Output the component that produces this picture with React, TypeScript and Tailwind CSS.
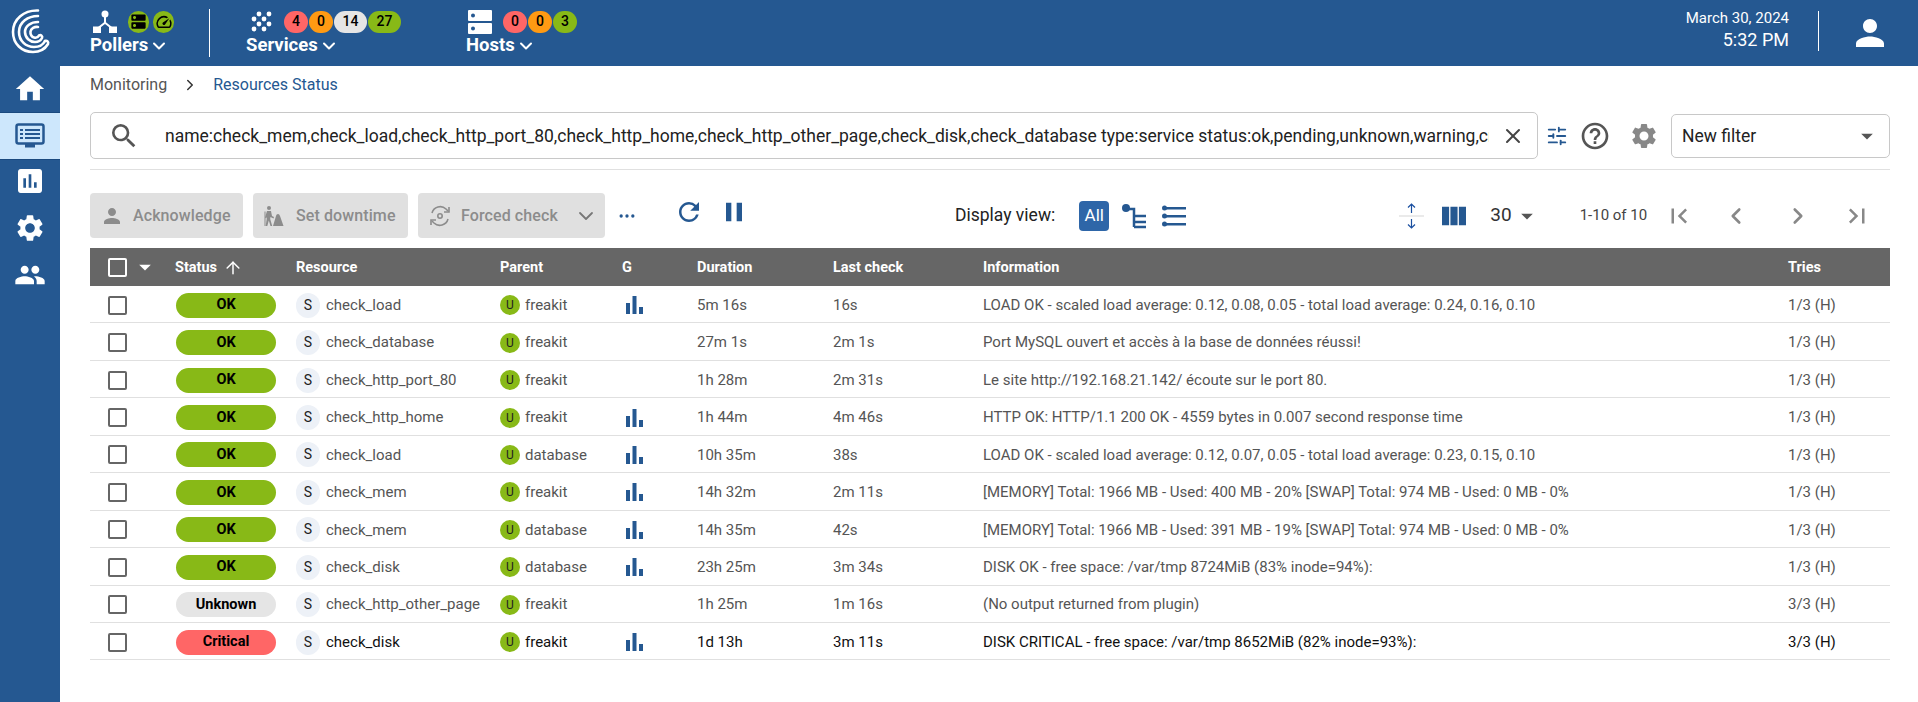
import { ArrowUp, ChevronDown, ChevronLeft, ChevronRight, MoreHorizontal, SlidersHorizontal, X } from 'lucide-react';
import {
  MdDns, MdHome, MdPause, MdPeople, MdPerson, MdRefresh, MdSearch, MdSettings, MdSpeed,
  MdArrowDropDown, MdHelpOutline, MdFirstPage, MdLastPage, MdViewColumn, MdPoll
} from 'react-icons/md';

const font = "font-['Roboto',sans-serif]";

const rows = [
  ['OK', 'check_load', 'freakit', true, '5m 16s', '16s', 'LOAD OK - scaled load average: 0.12, 0.08, 0.05 - total load average: 0.24, 0.16, 0.10', '1/3 (H)'],
  ['OK', 'check_database', 'freakit', false, '27m 1s', '2m 1s', 'Port MySQL ouvert et accès à la base de données réussi!', '1/3 (H)'],
  ['OK', 'check_http_port_80', 'freakit', false, '1h 28m', '2m 31s', 'Le site http://192.168.21.142/ écoute sur le port 80.', '1/3 (H)'],
  ['OK', 'check_http_home', 'freakit', true, '1h 44m', '4m 46s', 'HTTP OK: HTTP/1.1 200 OK - 4559 bytes in 0.007 second response time', '1/3 (H)'],
  ['OK', 'check_load', 'database', true, '10h 35m', '38s', 'LOAD OK - scaled load average: 0.12, 0.07, 0.05 - total load average: 0.23, 0.15, 0.10', '1/3 (H)'],
  ['OK', 'check_mem', 'freakit', true, '14h 32m', '2m 11s', '[MEMORY] Total: 1966 MB - Used: 400 MB - 20% [SWAP] Total: 974 MB - Used: 0 MB - 0%', '1/3 (H)'],
  ['OK', 'check_mem', 'database', true, '14h 35m', '42s', '[MEMORY] Total: 1966 MB - Used: 391 MB - 19% [SWAP] Total: 974 MB - Used: 0 MB - 0%', '1/3 (H)'],
  ['OK', 'check_disk', 'database', true, '23h 25m', '3m 34s', 'DISK OK - free space: /var/tmp 8724MiB (83% inode=94%):', '1/3 (H)'],
  ['Unknown', 'check_http_other_page', 'freakit', false, '1h 25m', '1m 16s', '(No output returned from plugin)', '3/3 (H)'],
  ['Critical', 'check_disk', 'freakit', true, '1d 13h', '3m 11s', 'DISK CRITICAL - free space: /var/tmp 8652MiB (82% inode=93%):', '3/3 (H)'],
] as const;

const cols = 'grid grid-cols-[85px_121px_204px_122px_75px_136px_150px_805px_1fr] items-center';

const Bars = () => (
  <svg width="17" height="18" viewBox="0 0 17 18" fill="#255891">
    <rect x="0" y="7" width="4" height="11" />
    <rect x="6.5" y="0" width="4" height="18" />
    <rect x="13" y="11" width="4" height="7" />
  </svg>
);

const Logo = () => (
  <svg width="44" height="50" viewBox="0 0 44 50" fill="none" stroke="#fff" strokeWidth="2.6" strokeLinecap="round">
    <path d="M30 4.500C16 4 5 13 5 26c0 12 9 20 20 20 7 0 12-3 15-8 .8-2-1-4-3-3" />
    <path d="M30 10C20 10 11 16 11 26c0 9 7 15 15 15 5 0 9-2 11-6" />
    <path d="M30 16c-7 0-13 4-13 10 0 6 5 10 10 10 4 0 6-2 7-4 .8-2-1-3.500-3-2.500-1 2-3 2.500-5 2-2-.5-4-3-3.500-6 .5-3 4-5 7.500-4.500" />
  </svg>
);

const PollerIcon = () => (
  <svg width="24" height="23" viewBox="0 0 24 23" fill="#fff">
    <circle cx="12" cy="4" r="3.5" />
    <rect x="11" y="6" width="2" height="7" />
    <path d="M12 11.500 5 17l1.200 1.500 5.800-4.500 5.800 4.500L19 17z" />
    <rect x="0" y="16.500" width="8" height="6.500" />
    <rect x="16" y="16.500" width="8" height="6.500" />
  </svg>
);

const ServicesIcon = () => (
  <svg width="22" height="21" viewBox="0 0 22 21" fill="#fff">
    {[[9, 3], [19, 3], [4, 8], [14, 8], [9, 13], [19, 13], [4, 18], [14, 18]].map(([cx, cy], i) => (
      <circle key={i} cx={cx} cy={cy} r={2.4} />
    ))}
  </svg>
);

const HostsIcon = () => (
  <svg width="24" height="24" viewBox="0 0 24 24" fill="#fff">
    <path fillRule="evenodd" d="M1 0h22a1 1 0 0 1 1 1v9a1 1 0 0 1-1 1H1a1 1 0 0 1-1-1V1a1 1 0 0 1 1-1zm4 3.500a2 2 0 1 0 0 4 2 2 0 0 0 0-4z" />
    <path fillRule="evenodd" d="M1 13h22a1 1 0 0 1 1 1v9a1 1 0 0 1-1 1H1a1 1 0 0 1-1-1v-9a1 1 0 0 1 1-1zm4 3.500a2 2 0 1 0 0 4 2 2 0 0 0 0-4z" />
  </svg>
);

const DowntimeIcon = () => (
  <svg width="20" height="22" viewBox="0 0 20 22" fill="#8c8c8c">
    <circle cx="5" cy="3" r="2" />
    <path d="M3 6h4l1 5 2 1-.5 1.500L6.500 12l-.3 2 2 7H6.500L4.800 15.500 3.300 21H1.700l1.300-9-.9 1.500L1 12.500z" />
    <path d="M0.500 6.500h1v14.500h-1z" />
    <path d="M14 9c1 0 1.500.8 2 2l3.500 10H9l3-10c.3-1.200 1-2 2-2z" />
  </svg>
);

const ForcedIcon = () => (
  <svg width="22" height="22" viewBox="0 0 22 22" fill="none" stroke="#8c8c8c" strokeWidth="1.600">
    <path d="M3 8a8.500 8.500 0 0 1 14-4l2 2" />
    <path d="M19 14a8.500 8.500 0 0 1-14 4l-2-2" />
    <path d="M20 2v5h-5M2 20v-5h5" />
    <circle cx="11" cy="11" r="2.200" />
  </svg>
);

const Badge = ({ color, children, wide }: { color: string; children: React.ReactNode; wide?: boolean }) => (
  <span className={`${color} ${wide ? 'w-[33px]' : 'w-[24px]'} h-[22px] rounded-full flex items-center justify-center text-[14px] font-medium text-black`}>
    {children}
  </span>
);

const NavLabel = ({ children }: { children: React.ReactNode }) => (
  <div className="flex items-center gap-[1px] text-[18.500px] font-bold leading-[22px]">
    {children}
    <ChevronDown size={20} strokeWidth={2.4} className="mt-[2px]" />
  </div>
);

function TopBar() {
  return (
    <header className="h-[66px] bg-[#255891] flex items-center text-white">
      <div className="w-[60px] flex justify-center -mt-[4px]"><Logo /></div>
      <div className="w-[150px] pl-[30px] h-[48px] border-r border-white">
        <div className="flex items-center gap-[11px] h-[25px] pl-[3px]">
          <PollerIcon />
          <div className="flex gap-[4px]">
            <span className="w-[21px] h-[22px] rounded-full bg-[#88b917] flex items-center justify-center text-black"><MdDns size={19} /></span>
            <span className="w-[21px] h-[22px] rounded-full bg-[#88b917] flex items-center justify-center text-black"><MdSpeed size={18} /></span>
          </div>
        </div>
        <NavLabel>Pollers</NavLabel>
      </div>
      <div className="w-[220px] pl-[36px] h-[48px]">
        <div className="flex items-center gap-[12px] h-[25px] pl-[4px]">
          <ServicesIcon />
          <div className="flex gap-[1px]">
            <Badge color="bg-[#ff6666]">4</Badge>
            <Badge color="bg-[#ff9a13]">0</Badge>
            <Badge color="bg-[#e5e5e5]" wide>14</Badge>
            <Badge color="bg-[#88b917]" wide>27</Badge>
          </div>
        </div>
        <NavLabel>Services</NavLabel>
      </div>
      <div className="pl-[36px] h-[48px]">
        <div className="flex items-center gap-[11px] h-[25px] pl-[2px]">
          <HostsIcon />
          <div className="flex gap-[1px]">
            <Badge color="bg-[#ff6666]">0</Badge>
            <Badge color="bg-[#ff9a13]">0</Badge>
            <Badge color="bg-[#88b917]">3</Badge>
          </div>
        </div>
        <NavLabel>Hosts</NavLabel>
      </div>
      <div className="ml-auto text-right pr-[29px] h-[40px] -mt-[4px] border-r border-white mr-[30px]">
        <div className="text-[15px] leading-[18px] -mt-[2px]">March 30, 2024</div>
        <div className="text-[18px] leading-[26px]">5:32 PM</div>
      </div>
      <div className="pr-[27px]"><MdPerson size={42} /></div>
    </header>
  );
}

function SideBar() {
  return (
    <aside className="w-[60px] bg-[#255891] text-white flex flex-col items-center shrink-0 min-h-[636px]">
      <div className="h-[46px] flex items-center"><MdHome size={34} /></div>
      <div className="h-[48px] w-full bg-[#cde7fc] flex items-center justify-center border-y border-[#1a4a7f]">
        <svg width="30" height="26" viewBox="0 0 30 26" fill="none">
          <rect x="1.500" y="1.500" width="27" height="19" rx="2" stroke="#255891" strokeWidth="2.500" />
          <path d="M5 7h3M10 7h15M5 11h3M10 11h15M5 15h3M10 15h15" stroke="#255891" strokeWidth="2" />
          <rect x="10" y="21" width="10" height="3.500" fill="#255891" />
        </svg>
      </div>
      <div className="h-[42px] flex items-center"><MdPoll size={32} /></div>
      <div className="h-[52px] flex items-center"><MdSettings size={32} /></div>
      <div className="h-[42px] flex items-center"><MdPeople size={32} /></div>
    </aside>
  );
}

function ActionButton({ icon, label, chevron, width, gap }: { icon: React.ReactNode; label: string; chevron?: boolean; width: string; gap: string }) {
  return (
    <div className={`${width} h-[45px] bg-[#e0e0e0] rounded-[4px] flex items-center pl-[11px] text-[#8c8c8c] text-[16px] font-medium tracking-[0.1px]`}>
      {icon}
      <span className={gap}>{label}</span>
      {chevron && <ChevronDown size={24} strokeWidth={1.800} className="ml-auto mr-[7px] text-[#777]" />}
    </div>
  );
}

export default function App() {
  return (
    <div className={`${font} w-[1918px] h-[702px] overflow-hidden bg-white text-[#555]`}>
      <TopBar />
      <div className="flex">
        <SideBar />
        <main className="flex-1 pl-[30px] pr-[28px]">
          <div className="h-[46px] pb-[8px] flex items-center text-[16px]">
            <span>Monitoring</span>
            <ChevronRight size={18} className="mx-[14px] text-[#333]" />
            <span className="text-[#255891]">Resources Status</span>
          </div>

          <div className="flex items-center h-[47px]">
            <div className="w-[1448px] h-[47px] border border-[#c8c8c8] rounded-[5px] flex items-center pl-[17px] pr-[12px]">
              <MdSearch size={32} className="text-[#555] shrink-0" />
              <div className="ml-[25px] pt-[2px] w-[1324px] overflow-hidden whitespace-nowrap text-[17.500px] text-[#222]">
                name:check_mem,check_load,check_http_port_80,check_http_home,check_http_other_page,check_disk,check_database type:service status:ok,pending,unknown,warning,critical
              </div>
              <X size={24} className="ml-auto text-[#444] shrink-0" />
            </div>
            <SlidersHorizontal size={22} className="ml-[8px] text-[#255891]" />
            <MdHelpOutline size={32} className="ml-[11px] text-[#555]" />
            <MdSettings size={30} className="ml-[18px] text-[#888]" />
            <div className="ml-[12px] w-[219px] h-[44px] pt-[1px] border border-[#c8c8c8] rounded-[5px] flex items-center pl-[10px] pr-[8px] text-[17.500px] text-[#222]">
              New filter
              <MdArrowDropDown size={28} className="ml-auto text-[#555]" />
            </div>
          </div>
          <div className="mt-[10px] border-t border-[#e0e0e0]" />

          <div className="h-[78px] pt-[13px] flex items-center">
            <ActionButton width="w-[153px]" gap="ml-[9px]" icon={<MdPerson size={24} className="-ml-[1px]" />} label="Acknowledge" />
            <div className="w-[10px]" />
            <ActionButton width="w-[155px]" gap="ml-[12px]" icon={<DowntimeIcon />} label="Set downtime" />
            <div className="w-[10px]" />
            <ActionButton width="w-[187px]" gap="ml-[10px]" icon={<ForcedIcon />} label="Forced check" chevron />
            <MoreHorizontal size={20} className="ml-[12px] text-[#255891]" />
            <MdRefresh size={30} className="ml-[37px] -mt-[8px] text-[#255891]" />
            <MdPause size={32} className="ml-[14px] -mt-[8px] text-[#255891]" />
            <span className="ml-[205px] text-[17.500px] text-[#222]">Display view:</span>
            <span className="ml-[24px] w-[30px] h-[30px] bg-[#2e66a8] rounded-[4px] text-white text-[17px] flex items-center justify-center">All</span>
            <svg className="ml-[12px]" width="26" height="26" viewBox="0 0 26 26" fill="none" stroke="#255891" strokeWidth="2.500">
              <circle cx="5" cy="5" r="4" fill="#255891" stroke="none" />
              <path d="M8 6h5v18M13 13h12M13 19h12M13 24h12" />
            </svg>
            <svg className="ml-[15px]" width="24" height="22" viewBox="0 0 24 22" fill="#255891">
              <circle cx="2.500" cy="3" r="2.500" /><circle cx="2.500" cy="11" r="2.500" /><circle cx="2.500" cy="19" r="2.500" />
              <rect x="4" y="2" width="20" height="2.500" /><rect x="4" y="10" width="20" height="2.500" /><rect x="4" y="18" width="20" height="2.500" />
            </svg>
            <svg className="ml-[213px]" width="25" height="26" viewBox="0 0 25 26" fill="none" stroke="#1a4fa0" strokeWidth="1.200">
              <path d="M12.500 1v9M9 4.500l3.500-3.500 3.500 3.500M12.500 25v-9M9 21.500l3.500 3.500 3.500-3.500" />
              <path d="M0 13h25" stroke="#ddd" />
            </svg>
            <MdViewColumn size={32} className="ml-[14px] text-[#255891]" />
            <span className="ml-[20px] text-[19px] text-[#333]">30</span>
            <MdArrowDropDown size={28} className="ml-[1px] text-[#555]" />
            <span className="ml-[39px] text-[15px] text-[#444]">1-10 of 10</span>
            <MdFirstPage size={30} className="ml-[17px] text-[#888]" />
            <ChevronLeft size={26} strokeWidth={2.4} className="ml-[29px] text-[#888]" />
            <ChevronRight size={26} strokeWidth={2.4} className="ml-[36px] text-[#888]" />
            <MdLastPage size={30} className="ml-[31px] text-[#888]" />
          </div>

          <div className={`${cols} h-[38px] pt-[2px] bg-[#666] text-white text-[14.500px] font-bold`}>
            <div className="flex items-center pl-[18px] gap-[10px] -mt-[2px]">
              <span className="w-[19px] h-[19px] border-2 border-white rounded-[2px]" />
              <MdArrowDropDown size={28} className="-ml-[6px]" />
            </div>
            <div className="flex items-center gap-[6px]">Status <ArrowUp size={20} strokeWidth={1.800} /></div>
            <div>Resource</div>
            <div>Parent</div>
            <div>G</div>
            <div>Duration</div>
            <div>Last check</div>
            <div>Information</div>
            <div>Tries</div>
          </div>

          {rows.map(([status, resource, parent, graph, duration, last, info, tries], i) => (
            <div key={i} className={`${cols} h-[37.45px] pt-[2px] border-b border-[#e0e0e0] text-[15px] ${status === 'Critical' ? 'text-[#111]' : ''}`}>
              <div className="pl-[18px]"><span className="block w-[19px] h-[19px] border-2 border-[#666] rounded-[2px]" /></div>
              <div className="pl-[1px]">
                <span className={`w-[100px] h-[25px] rounded-full flex items-center justify-center text-[14.500px] font-bold text-black ${status === 'OK' ? 'bg-[#88b917]' : status === 'Unknown' ? 'bg-[#e5e5e5]' : 'bg-[#ff6666]'}`}>{status}</span>
              </div>
              <div className="flex items-center gap-[6px]">
                <span className="w-[24px] h-[25px] rounded-full bg-[#edf1f7] flex items-center justify-center text-[14px] text-[#222]">S</span>
                {resource}
              </div>
              <div className="flex items-center gap-[5px]">
                <span className="w-[20px] h-[20px] rounded-full bg-[#88b917] flex items-center justify-center text-[12px] text-[#222]">U</span>
                {parent}
              </div>
              <div className="pl-[4px]">{graph && <Bars />}</div>
              <div>{duration}</div>
              <div>{last}</div>
              <div className="whitespace-nowrap">{info}</div>
              <div>{tries}</div>
            </div>
          ))}
        </main>
      </div>
    </div>
  );
}
